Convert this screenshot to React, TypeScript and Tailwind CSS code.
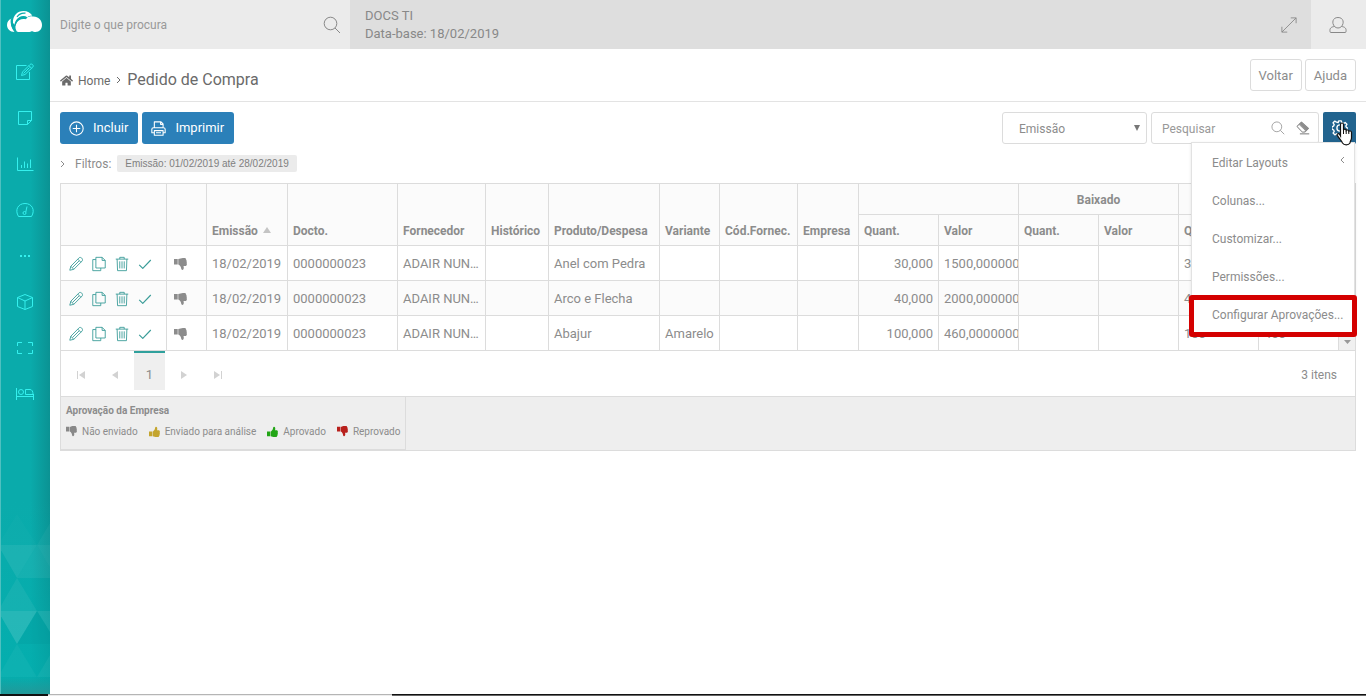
import React, { useState } from 'react';
import { FaHome } from 'react-icons/fa';

interface Pedido {
  id: number;
  emissao: string;
  docto: string;
  fornecedor: string;
  produto: string;
  variante: string;
  quant: string;
  valor: string;
  saldoQuant: string;
  saldoValor: string;
}

const pedidos: Pedido[] = [
  { id: 1, emissao: '18/02/2019', docto: '0000000023', fornecedor: 'ADAIR NUNES DA SILVA', produto: 'Anel com Pedra', variante: '', quant: '30,000', valor: '1500,0000000', saldoQuant: '30', saldoValor: '1500' },
  { id: 2, emissao: '18/02/2019', docto: '0000000023', fornecedor: 'ADAIR NUNES DA SILVA', produto: 'Arco e Flecha', variante: '', quant: '40,000', valor: '2000,0000000', saldoQuant: '40', saldoValor: '2000' },
  { id: 3, emissao: '18/02/2019', docto: '0000000023', fornecedor: 'ADAIR NUNES DA SILVA', produto: 'Abajur', variante: 'Amarelo', quant: '100,000', valor: '460,00000000', saldoQuant: '100', saldoValor: '460' },
];

const menuItems = ['Editar Layouts', 'Colunas...', 'Customizar...', 'Permissões...', 'Configurar Aprovações...'];

interface IconProps {
  size?: number;
  className?: string;
  children: React.ReactNode;
}

const Icon: React.FC<IconProps> = ({ size = 18, className = '', children }) => (
  <svg
    width={size}
    height={size}
    viewBox="0 0 18 18"
    fill="none"
    stroke="currentColor"
    strokeWidth="1"
    strokeLinejoin="round"
    className={`shrink-0 ${className}`}
    aria-hidden="true"
  >
    {children}
  </svg>
);

const SearchIcon = ({ size = 18 }: { size?: number }) => (
  <Icon size={size}>
    <circle cx="7.5" cy="7.5" r="6.3" />
    <path d="M12 12l5 5" />
  </Icon>
);

const Thumb = ({ size = 13, className = '' }: { size?: number; className?: string }) => (
  <svg width={size} height={size} viewBox="0 0 13 13" fill="currentColor" className={`shrink-0 ${className}`} aria-hidden="true">
    <path d="M0 1h3.700v5.500H0zM4.300 1C6 .8 7 0 9 0h1.500c1 0 1.500.6 1.400 1.300.6.500.8 1.200.6 1.900.4.600.4 1.300.1 1.900.7 1.400 0 2.900-1.400 2.900H9.500c.5 1.500.5 4-1.200 4-1.300 0-1-1.800-1.500-2.900C6.200 8 5.500 6.800 4.300 6.500z" />
  </svg>
);

const sideItems = [
  {
    label: 'Editar',
    icon: (
      <>
        <path d="M10.500 2.500H.5v14h13V9" />
        <path d="M5.500 12.500l1-3.500L14 1.500c1.800-1.500 4.300 1 2.700 2.700L9 11.500z" />
        <path d="M13 2.700l2.600 2.600M7.500 10.500l6-6" />
      </>
    ),
  },
  { label: 'Notas', icon: <path d="M2.500 2.500h13v9l-4 4h-9zM11.500 15.500v-4h4" /> },
  { label: 'Relatórios', icon: <path d="M1.500 2.500v13h16M5.500 13V10M8.500 13V6.500M11.500 13V8.500M14.500 13V4.500" /> },
  {
    label: 'Indicadores',
    icon: (
      <>
        <path d="M2.500 15.500C-1.500 9 2 2.500 9 2.500S19.500 9 15.500 15.500z" />
        <path d="M11 5.500L9.800 11" />
        <circle cx="8.500" cy="12" r="1.500" />
      </>
    ),
  },
  { label: 'Mais', icon: <path d="M4 9h2M8 9h2M12 9h2" strokeWidth="2" /> },
  { label: 'Produtos', icon: <path d="M9 1.500l7.500 3v9L9 16.500l-7.500-3v-9zM1.500 4.500L9 8l7.500-3.500M9 8v8.500" /> },
  { label: 'Tela cheia', icon: <path d="M1.500 7V3.500H6M12 3.500h4.500V7M16.500 11v3.500H12M6 14.500H1.500V11" /> },
  {
    label: 'Hotelaria',
    icon: (
      <>
        <path d="M.5 3v12M.5 11.500h17M17.500 15V9M9.500 9.500v-5H14c2 0 3 2 3 5z" />
        <circle cx="5" cy="7" r="2.500" />
      </>
    ),
  },
];

const Sidebar = () => (
  <aside className="flex w-[50px] shrink-0 flex-col border-l border-[#4fc0c0] bg-linear-to-r from-[#0aabab] from-60% to-[#0b9293]">
    <a href="#" aria-label="Início" className="flex h-[49px] items-start justify-center pt-[10px] pr-[1px]">
      <svg width="36" height="23" viewBox="0 0 36 23" aria-hidden="true">
        <path d="M8 22C2.500 22 0 18.500 0 15c0-3 1.800-5.500 4.500-6.500C3.500 12 4 17 8 22z" fill="#fff" />
        <path d="M6 13C5.500 5.500 10.500 1 16.500 1c4 0 7 1.800 8.800 4.500-2.300 0-3.800.8-5 1.800C16 4.500 9.500 6.500 8 15z" fill="#fff" />
        <path d="M9.500 21C6 14.500 12 7.500 18.500 9.300 20.500 6.800 23 6 25.500 6.500 31 6 35 10 35 15c0 4-2.500 7-6.500 7-1.500 0-2.500-.3-3.500-1-1 .8-2 1-3.500 1H12c-1 0-2-.4-2.500-1z" fill="#fff" />
        <path d="M4.500 8.500C3.800 13 5 18 8.500 22" fill="none" stroke="#0aabab" strokeWidth="1.500" />
        <path d="M8 15.500C9 9 14 5.500 19.700 8" fill="none" stroke="#0aabab" strokeWidth="1.500" />
        <path d="M10 7c2-3 5-4.300 8.500-3.800" fill="none" stroke="#0aabab" strokeWidth="1.200" />
      </svg>
    </a>
    <nav className="flex flex-col">
      {sideItems.map((item) => (
        <button key={item.label} aria-label={item.label} className="flex h-[46px] items-center justify-center pr-[1px] text-[#35f0ee]">
          <Icon>{item.icon}</Icon>
        </button>
      ))}
    </nav>
    <svg className="mt-auto w-full" height="194" viewBox="0 0 49 194" preserveAspectRatio="none" aria-hidden="true">
      <defs>
        <linearGradient id="fade" x1="0" y1="0" x2="0" y2="1">
          <stop offset="0" stopColor="#00b0b0" stopOpacity="0" />
          <stop offset="1" stopColor="#00b0b0" stopOpacity=".7" />
        </linearGradient>
        <linearGradient id="shade" x1="0" y1="0" x2="0" y2="1">
          <stop offset="0" stopColor="#2f8f90" stopOpacity="0" />
          <stop offset="1" stopColor="#2f8f90" stopOpacity=".7" />
        </linearGradient>
      </defs>
      <rect width="49" height="194" fill="url(#fade)" />
      <g fill="#fff">
        <path d="M16 14L-3 45h39z" opacity=".02" />
        <path d="M36 45l13-22v22z" opacity=".04" />
        <path d="M-3 45h39L16 78z" opacity=".08" />
        <path d="M36 45L16 78h40z" opacity=".06" />
        <path d="M36 45h13v22z" opacity=".08" />
        <path d="M16 78l-19 33h39z" opacity=".06" />
        <path d="M-3 111h39l-20 33z" opacity=".13" />
        <path d="M36 111h13v21z" opacity=".08" />
        <path d="M16 144l-19 33h39z" opacity=".04" />
        <path d="M36 177l13-22v22z" opacity=".05" />
      </g>
      <path d="M36 111l-20 33h33v-12z" fill="#008f94" opacity=".2" />
      <rect y="176" width="49" height="18" fill="url(#shade)" />
    </svg>
  </aside>
);

const TopBar = () => (
  <header className="flex h-[49px] text-[#888]">
    <div className="flex w-[300px] items-center bg-[#ebebeb] pr-[9px] pl-[10px]">
      <input
        type="text"
        aria-label="Digite o que procura"
        placeholder="Digite o que procura"
        className="min-w-0 flex-1 bg-transparent text-[12px] outline-none placeholder:text-[#999]"
      />
      <button aria-label="Buscar">
        <SearchIcon />
      </button>
    </div>
    <div className="flex flex-1 items-center justify-between bg-[#dedede] pr-[14px] pl-[15px]">
      <div className="text-[13px] leading-[18px]">
        <p>DOCS TI</p>
        <p>Data-base: 18/02/2019</p>
      </div>
      <button aria-label="Expandir">
        <Icon size={16}>
          <path d="M1 17L17 1M11 1h6v6M1 11v6h6" />
        </Icon>
      </button>
    </div>
    <button aria-label="Usuário" className="flex w-[55px] items-center justify-center bg-[#ebebeb] pr-[1px]">
      <Icon>
        <path d="M5.500 10.500C2.500 7 3.500 1.500 9 1.500s6.500 5.500 3.500 9c3.500.3 5 2 4.500 5 0 .7-.3 1-1 1H2c-.7 0-1-.3-1-1-.5-3 1-4.700 4.500-5zM5.500 10.500c2 2 5 2 7 0" />
      </Icon>
    </button>
  </header>
);

const RowActions = () => (
  <div className="flex items-center gap-[7px] pl-[2px] text-[#3a9c98]">
    <button aria-label="Editar">
      <Icon size={16}>
        <path d="M2 16l1.200-4.500L12.500 2c1.800-1.500 4.800 1.300 3.500 3.500L6.500 15zM3.200 11.500l3.300 3.500M11 3.500l3.500 3.500M5 13l7.500-7.500" />
      </Icon>
    </button>
    <button aria-label="Copiar">
      <Icon size={16}>
        <path d="M5.500 1.500h7l3.500 3.500v8.500H5.500zM12.500 1.500V5H16M5.500 4H2v12.500h9v-3" />
      </Icon>
    </button>
    <button aria-label="Excluir">
      <Icon size={16}>
        <path d="M2 3.500h14M6.500 3.500v-2h5v2M3.500 3.500l.5 13h10l.5-13M6.500 6v8M9 6v8M11.500 6v8" />
      </Icon>
    </button>
    <button aria-label="Aprovar">
      <Icon size={16}>
        <path d="M2.500 10l4 4L15.500 4.500" strokeWidth="1.300" />
      </Icon>
    </button>
  </div>
);

const th = 'border-r border-b border-[#dcdcdc] px-[5px] pb-[4px] text-left align-bottom font-bold whitespace-nowrap';
const td = 'border-r border-b border-[#dcdcdc] px-[5px] pt-[2px] whitespace-nowrap overflow-hidden';

const OrdersTable = () => (
  <div className="flex">
    <table className="w-full min-w-0 flex-1 table-fixed border-separate border-spacing-0 text-[13px] leading-[20px]">
      <colgroup>
        <col className="w-[106px]" />
        <col className="w-[40px]" />
        <col className="w-[81px]" />
        <col className="w-[110px]" />
        <col className="w-[88px]" />
        <col className="w-[63px]" />
        <col className="w-[111px]" />
        <col className="w-[60px]" />
        <col className="w-[78px]" />
        <col className="w-[61px]" />
        <col className="w-[80px]" />
        <col className="w-[80px]" />
        <col className="w-[80px]" />
        <col className="w-[80px]" />
        <col className="w-[80px]" />
        <col className="w-[80px]" />
      </colgroup>
      <thead className="bg-[#fbfbfb] text-[12px]">
        <tr className="h-[31px]">
          <th rowSpan={2} className={th} aria-label="Ações"></th>
          <th rowSpan={2} className={th} aria-label="Situação"></th>
          <th rowSpan={2} className={th}>
            <span className="flex items-center gap-[5px]">
              Emissão
              <svg width="8" height="6" viewBox="0 0 8 6" className="mb-[3px]" aria-hidden="true">
                <path d="M0 6l4-6 4 6z" fill="#c4c4c4" />
              </svg>
            </span>
          </th>
          <th rowSpan={2} className={th}>Docto.</th>
          <th rowSpan={2} className={th}>Fornecedor</th>
          <th rowSpan={2} className={th}>Histórico</th>
          <th rowSpan={2} className={th}>Produto/Despesa</th>
          <th rowSpan={2} className={th}>Variante</th>
          <th rowSpan={2} className={th}>Cód.Fornec.</th>
          <th rowSpan={2} className={th}>Empresa</th>
          <th colSpan={2} className={th}></th>
          <th colSpan={2} className="border-r border-b border-[#dcdcdc] pt-[2px] text-center font-bold">Baixado</th>
          <th colSpan={2} className={th}></th>
        </tr>
        <tr className="h-[31px]">
          <th className={th}>Quant.</th>
          <th className={th}>Valor</th>
          <th className={th}>Quant.</th>
          <th className={th}>Valor</th>
          <th className={th}>Quant.</th>
          <th className={th}>Valor</th>
        </tr>
      </thead>
      <tbody>
        {pedidos.map((p) => (
          <tr key={p.id} className="h-[35px] even:bg-[#fbfbfb]">
            <td className={td}><RowActions /></td>
            <td className={td}><Thumb className="mx-[2px]" /></td>
            <td className={td}>{p.emissao}</td>
            <td className={td}>{p.docto}</td>
            <td className={`${td} text-ellipsis`}>{p.fornecedor}</td>
            <td className={td}></td>
            <td className={td}>{p.produto}</td>
            <td className={td}>{p.variante}</td>
            <td className={td}></td>
            <td className={td}></td>
            <td className={`${td} text-right`}>{p.quant}</td>
            <td className={`${td} pr-0`}>{p.valor}</td>
            <td className={td}></td>
            <td className={td}></td>
            <td className={td}>{p.saldoQuant}</td>
            <td className={td}>{p.saldoValor}</td>
          </tr>
        ))}
      </tbody>
    </table>
    <div className="flex w-[16px] shrink-0 flex-col justify-end border-b border-[#dcdcdc]">
      <button aria-label="Rolar para baixo" className="flex h-[17px] items-center justify-center bg-[#f0f0f0]">
        <svg width="7" height="4" viewBox="0 0 7 4" aria-hidden="true">
          <path d="M0 0h7L3.500 4z" fill="#999" />
        </svg>
      </button>
    </div>
  </div>
);

const Pager = () => (
  <div className="flex h-[45px] items-start text-[12px]">
    <button aria-label="Primeira página" className="ml-[5px] flex h-[47px] w-[29px] items-center justify-center text-[#d2d2d2]">
      <svg width="8" height="8" viewBox="0 0 8 8" fill="currentColor" aria-hidden="true"><path d="M0 0h1v8H0zM8 0v8L2 4z" /></svg>
    </button>
    <button aria-label="Página anterior" className="flex h-[47px] w-[39px] items-center justify-center text-[#d2d2d2]">
      <svg width="6" height="8" viewBox="0 0 6 8" fill="currentColor" aria-hidden="true"><path d="M6 0v8L0 4z" /></svg>
    </button>
    <button className="flex h-[39px] w-[31px] items-center justify-center border-t-2 border-[#2fa09c] bg-[#efefef] pt-[7px] text-[13px]">1</button>
    <button aria-label="Próxima página" className="flex h-[47px] w-[38px] items-center justify-center text-[#d2d2d2]">
      <svg width="6" height="8" viewBox="0 0 6 8" fill="currentColor" aria-hidden="true"><path d="M0 0v8l6-4z" /></svg>
    </button>
    <button aria-label="Última página" className="flex h-[47px] w-[29px] items-center justify-center text-[#d2d2d2]">
      <svg width="8" height="8" viewBox="0 0 8 8" fill="currentColor" aria-hidden="true"><path d="M7 0h1v8H7zM0 0v8l6-4z" /></svg>
    </button>
    <span className="ml-auto pr-[18px] leading-[48px]">3 itens</span>
  </div>
);

const Legend = () => (
  <div className="flex border-t border-[#dcdcdc] bg-[#eee]">
    <div className="border-r border-b border-[#dcdcdc] px-[5px] pt-[5px] pb-[10px]">
      <p className="text-[10px] leading-[17px] font-bold">Aprovação da Empresa</p>
      <ul className="flex gap-[11px] pt-[5px] text-[10px] leading-[15px]">
        <li className="flex items-center gap-[5px]"><Thumb size={11} className="text-[#888]" />Não enviado</li>
        <li className="flex items-center gap-[5px]"><Thumb size={11} className="-scale-y-100 text-[#c4a52e]" />Enviado para análise</li>
        <li className="flex items-center gap-[5px]"><Thumb size={11} className="-scale-y-100 text-[#22a516]" />Aprovado</li>
        <li className="flex items-center gap-[5px]"><Thumb size={11} className="text-[#b8201c]" />Reprovado</li>
      </ul>
    </div>
  </div>
);

const SettingsMenu = () => (
  <ul className="absolute top-[30px] right-[1px] z-10 w-[164px] border border-[#e2e2e2] bg-white text-[12px] shadow-sm">
    {menuItems.map((item, i) => (
      <li key={item} className="relative">
        <button className="flex h-[38px] w-full items-center justify-between pt-[2px] pr-[9px] pl-[20px] whitespace-nowrap">
          {item}
          {i === 0 && (
            <svg width="5" height="14" viewBox="0 0 5 14" fill="none" stroke="currentColor" aria-hidden="true">
              <path d="M4 1L1 4l3 3" />
            </svg>
          )}
        </button>
        {i === menuItems.length - 1 && (
          <span className="pointer-events-none absolute -inset-x-[3px] top-0 h-[42px] rounded-[3px] border-[5px] border-[#d40000]" />
        )}
      </li>
    ))}
  </ul>
);

const Toolbar = () => {
  const [open, setOpen] = useState(true);

  return (
    <div className="flex h-[32px] items-stretch justify-between">
      <div className="flex gap-[4px] text-[13px] text-white">
        <button className="flex items-center gap-[9px] rounded-[3px] bg-[#2b80b9] pr-[10px] pl-[9px]">
          <Icon size={15}>
            <g strokeWidth="1.300">
              <circle cx="9" cy="9" r="8" />
              <path d="M9 4.500v9M4.500 9h9" />
            </g>
          </Icon>
          Incluir
        </button>
        <button className="flex items-center gap-[9px] rounded-[3px] bg-[#2b80b9] pr-[10px] pl-[9px]">
          <Icon size={15}>
            <g strokeWidth="1.300">
              <path d="M4 8V1h8l2.500 2.500V8M4 14H1v-4c0-1.500.7-2 2-2h12c1.300 0 2 .5 2 2v4h-3M4 11.500h10.500V17H4zM6 14h6M11.500 1v3h3" />
            </g>
          </Icon>
          Imprimir
        </button>
      </div>
      <div className="flex gap-[4px] text-[12px]">
        <div className="relative flex w-[145px]">
          <select aria-label="Ordenar por" className="w-full appearance-none rounded-[3px] border border-[#dcdcdc] bg-white pt-[2px] pl-[16px] outline-none">
            <option>Emissão</option>
          </select>
          <svg className="pointer-events-none absolute top-[13px] right-[7px]" width="6" height="6" viewBox="0 0 6 6" aria-hidden="true">
            <path d="M0 0h6L3 6z" fill="#777" />
          </svg>
        </div>
        <div className="flex w-[168px] items-center gap-[11px] rounded-[3px] border border-[#dcdcdc] pr-[8px] pl-[10px]">
          <input type="text" aria-label="Pesquisar" placeholder="Pesquisar" className="min-w-0 flex-1 pt-[2px] outline-none placeholder:text-[#999]" />
          <button aria-label="Pesquisar">
            <SearchIcon size={14} />
          </button>
          <button aria-label="Limpar">
            <Icon size={14}>
              <path d="M1.500 7L7 1.500l9 8-4.500 4.500H8z" strokeWidth="1.300" />
              <path d="M1.500 7L4 4.500l8 7.500-1 2H8z" fill="#fff" />
              <path d="M4.500 4L7 1.500l9 8-3 3z" fill="currentColor" />
              <path d="M5 16.500h12" strokeWidth="1.500" />
            </Icon>
          </button>
        </div>
        <div className="relative flex">
          <button
            aria-label="Configurações"
            aria-expanded={open}
            onClick={() => setOpen(!open)}
            className="flex w-[33px] items-center justify-center rounded-[2px] bg-[#22648f] text-white"
          >
            <Icon size={16}>
              <g strokeWidth="1.500">
                <path d="M7.500 1h3l.5 2.300 1.800.8 2-1.300 2 2-1.300 2 .8 1.700 1.700.5v2l-1.700.8-.8 1.700 1.300 2-2 2-2-1.300-1.800.8-.5 1.500h-3L7 16.200l-1.800-.7-2 1.200-2-2 1.300-2-.8-1.700L0 10.500v-3L1.700 7l.8-1.800-1.300-2 2-2 2 1.300L7 3z" />
                <circle cx="9" cy="9" r="3.500" />
              </g>
            </Icon>
          </button>
          {open && <SettingsMenu />}
          {/* hand pointer resting on the gear */}
          <svg className="pointer-events-none absolute top-[10px] left-[13px] z-20" width="17" height="24" viewBox="0 0 17 24" aria-hidden="true">
            <path
              d="M4.500 14V2.500C4.500.5 7.500.5 7.500 2.500V8c.5-1.300 2.500-1 2.700.5.700-1 2.400-.7 2.600.8.800-.9 2.700-.4 2.700 1.200V16c0 2-1.500 3-1.500 5-1.500 2.500-6 2.500-7.500 0C5.500 18.500 2.500 16 1.300 13.300c-.6-1.500 1.200-2.300 2.200-1z"
              fill="#fff"
              stroke="#111"
              strokeWidth="1.200"
            />
            <path d="M7.500 8v4M10.200 8.500V12M12.800 9.500V12" stroke="#111" />
          </svg>
        </div>
      </div>
    </div>
  );
};

const App = () => {
  return (
    <div className="flex min-h-screen flex-col overflow-hidden bg-white font-[Roboto,sans-serif] text-[#8c8c8c]">
      <div className="flex flex-1">
        <Sidebar />
        <div className="min-w-0 flex-1">
          <TopBar />
          <div className="flex h-[53px] items-center justify-between border-b border-[#e3e3e3] px-[10px]">
            <div className="flex items-center pt-[9px] text-[#6a6a6a]">
              <a href="#" className="flex items-center gap-[5px] pt-[2px] text-[12px]">
                <FaHome size={13} />
                Home
              </a>
              <svg className="mx-[6px]" width="5" height="8" viewBox="0 0 5 8" fill="none" stroke="currentColor" aria-hidden="true">
                <path d="M1 1l3 3-3 3" />
              </svg>
              <h1 className="text-[16px]">Pedido de Compra</h1>
            </div>
            <div className="flex gap-[3px] text-[13px]">
              <button className="h-[32px] rounded-[3px] border border-[#dcdcdc] px-[8px] pt-[2px]">Voltar</button>
              <button className="h-[32px] rounded-[3px] border border-[#dcdcdc] px-[8px] pt-[2px]">Ajuda</button>
            </div>
          </div>

          <main className="px-[10px] pt-[10px]">
            <Toolbar />
            <div className="flex h-[39px] items-center text-[12px]">
              <svg width="5" height="8" viewBox="0 0 5 8" fill="none" stroke="currentColor" aria-hidden="true">
                <path d="M1 1l3 3-3 3" />
              </svg>
              <span className="pl-[10px]">Filtros:</span>
              <span className="ml-[6px] rounded-[2px] bg-[#ebebeb] px-[8px] font-['Liberation_Sans',sans-serif] text-[10px] leading-[17px] text-[#808080]">
                Emissão: 01/02/2019 até 28/02/2019
              </span>
            </div>
            <div className="border border-[#dcdcdc]">
              <OrdersTable />
              <Pager />
              <Legend />
            </div>
          </main>
        </div>
      </div>
      <div className="flex h-[2px]">
        <div className="w-[48px] bg-[#111]" />
        <div className="w-[344px] border-t border-[#b5b5b5] bg-[#eee]" />
        <div className="flex-1 border-t border-[#111] bg-[#666]" />
      </div>
    </div>
  );
};

export default App;
